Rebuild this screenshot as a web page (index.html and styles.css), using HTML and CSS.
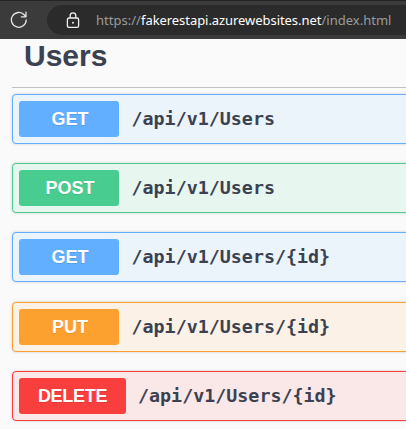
FILE: index.html
```
<!DOCTYPE html>
<html lang="en">
<head>
<meta charset="utf-8">
<title>Users</title>
<link rel="stylesheet" href="styles.css">
</head>
<body>
<header class="toolbar">
  <svg class="reload" width="18" height="18" viewBox="0 0 18 18" fill="none" stroke="#e6e6e6" stroke-width="1.3" stroke-linecap="round" stroke-linejoin="round"><path d="M16.2 9a7.4 7.4 0 1 1-2-5.2L15.8 5.6M16 1.2v4.6h-4.6"/></svg>
  <div class="address">
    <svg class="lock" width="14" height="17" viewBox="0 0 14 17" fill="none" stroke="#f0f0f0" stroke-width="1.3"><rect x="1.4" y="6" width="11.2" height="9.4" rx="1.6"/><path d="M4.2 6V3.7a2.8 2.8 0 0 1 5.6 0V6"/><circle cx="7" cy="10.7" r="1" fill="#f0f0f0" stroke="none"/></svg>
    <div class="url"><span class="scheme">https://</span><span class="domain">fakerestapi.azurewebsites.net</span><span class="page">/index.html</span></div>
  </div>
</header>
<main class="section">
  <h1 class="heading">Users</h1>
  <div class="operations">
    <div class="op get"><span class="method">GET</span><span class="path">/api/v1/Users</span></div>
    <div class="op post"><span class="method">POST</span><span class="path">/api/v1/Users</span></div>
    <div class="op get"><span class="method">GET</span><span class="path">/api/v1/Users/{id}</span></div>
    <div class="op put"><span class="method">PUT</span><span class="path">/api/v1/Users/{id}</span></div>
    <div class="op delete"><span class="method">DELETE</span><span class="path">/api/v1/Users/{id}</span></div>
  </div>
</main>
</body>
</html>
```
FILE: styles.css
```
* { box-sizing: border-box; }
body { margin: 0; height: 429px; overflow: hidden; background: #fafafa; font-family: "Liberation Sans", Arial, sans-serif; color: #3b4151; }
.toolbar { display: flex; height: 39px; padding: 4px 0 3px 10px; background: #3b3b3b; border-top: 1px solid #242424; }
.reload { flex: none; margin-top: 6px; }
.address { display: flex; flex: 1; height: 30px; margin-left: 19px; padding-left: 19px; background: #2b2b2b; border-radius: 15px 0 0 15px; }
.lock { flex: none; margin-top: 7px; }
.url { margin-left: 16px; font: 13px/30px "Noto Sans", sans-serif; white-space: nowrap; display: flex; }
.scheme, .page { color: #9b9b9b; }
.scheme { width: 45px; }
.domain { width: 180.5px; color: #fff; letter-spacing: -0.06px; }
.section { padding-left: 12px; }
.heading { margin: 0; height: 49px; padding-left: 12px; border-bottom: 1px solid #bfc0c3; font-size: 30px; line-height: 34px; }
.operations { display: flex; flex-direction: column; gap: 19.2px; padding-top: 6px; }
.op { display: flex; align-items: center; height: 50px; width: 410px; padding: 0 6px; border: 1px solid; border-radius: 4px; box-shadow: 0 0 3px rgba(0, 0, 0, .19); }
.method { min-width: 100px; height: 36px; padding: 0 18px 0 20px; border-radius: 3px; color: #fff; font-size: 18px; font-weight: 700; line-height: 36px; text-align: center; text-shadow: 0 1px 0 rgba(0, 0, 0, .1); }
.path { margin-left: 12.5px; font: 700 18.33px/24px "DejaVu Sans Mono", monospace; white-space: nowrap; }
.get { border-color: #61affe; background: #ebf3fb; }
.get .method { background: #61affe; }
.post { border-color: #49cc90; background: #e8f6f0; }
.post .method { background: #49cc90; }
.put { border-color: #fca130; background: #fbf1e6; }
.put .method { background: #fca130; }
.delete { border-color: #f93e3e; background: #fae7e7; }
.delete .method { width: 107px; padding: 0; background: #f93e3e; letter-spacing: -0.3px; }
.delete .path { margin-left: 12px; }
```
